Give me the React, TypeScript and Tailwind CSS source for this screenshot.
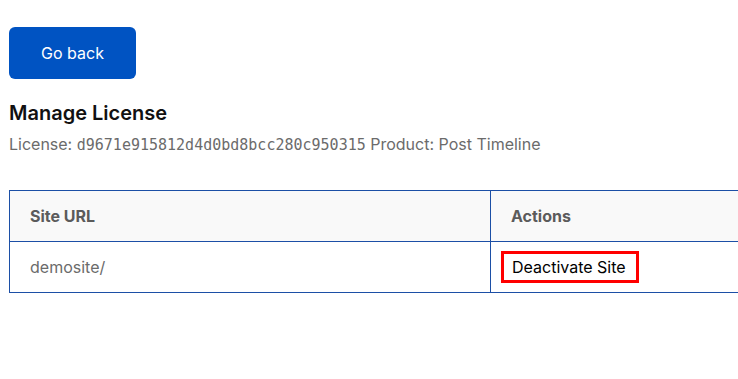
import React from 'react';

export default function App() {
  return (
    <div className="min-h-[379px] bg-white pl-[9px] pt-[27px] font-['Inter',sans-serif] overflow-hidden">
      <button className="h-[52px] w-[127px] rounded-md bg-[#0053c2] text-white text-[16px]">
        Go back
      </button>

      <h2 className="mt-[20px] text-[20px] font-semibold text-[#111] leading-[28px]">Manage License</h2>
      <p className="mt-[5px] text-[16px] text-[#6b6b6b] leading-[24px]">
        License: <span className="font-['DejaVu_Sans_Mono',monospace] text-[15px]">d9671e915812d4d0bd8bcc280c950315</span> Product: Post Timeline
      </p>

      <table className="mt-[33px] w-[780px] border-collapse border border-[#1c4fa6] text-[16px]">
        <thead>
          <tr className="bg-[#f9f9f9] h-[51px]">
            <th className="w-[481px] border border-[#1c4fa6] px-[20px] text-left font-bold text-[#5b5b5b]">Site URL</th>
            <th className="border border-[#1c4fa6] px-[20px] text-left font-bold text-[#5b5b5b]">Actions</th>
          </tr>
        </thead>
        <tbody>
          <tr className="h-[51px]">
            <td className="border border-[#1c4fa6] px-[20px] text-[#6b6b6b]">demosite/</td>
            <td className="border border-[#1c4fa6] px-[10px]">
              <button className="h-[32px] w-[138px] border-[3px] border-[#f00] pl-[8px] text-left text-[16px] text-black">
                Deactivate Site
              </button>
            </td>
          </tr>
        </tbody>
      </table>
    </div>
  );
}
